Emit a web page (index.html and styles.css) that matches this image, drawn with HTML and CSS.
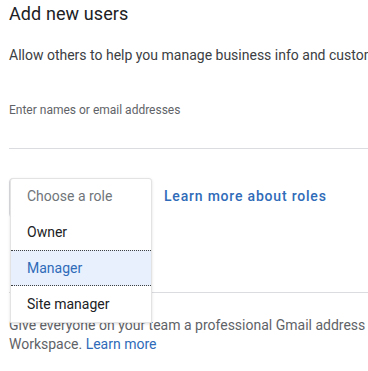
FILE: index.html
```html
<!DOCTYPE html>
<html>
<head>
<meta charset="utf-8">
<link rel="stylesheet" href="styles.css">
</head>
<body>
<div class="page">
  <h1 class="title">Add new users</h1>
  <p class="intro">Allow others to help you manage business info and customer interactions</p>
  <div class="field">
    <div class="label">Enter names or email addresses</div>
    <div class="underline"></div>
  </div>
  <div class="role-row">
    <div class="select-wrap">
      <div class="select"></div>
      <ul class="menu">
        <li class="item placeholder">Choose a role</li>
        <li class="item">Owner</li>
        <li class="item active">Manager</li>
        <li class="item">Site manager</li>
      </ul>
    </div>
    <a class="roles-link">Learn more about roles</a>
  </div>
  <div class="divider"></div>
  <p class="promo">Give everyone on your team a professional Gmail address with Google Workspace. <a class="link">Learn more</a></p>
</div>
</body>
</html>
```
FILE: styles.css
```css
html, body {
  margin: 0;
  padding: 0;
  background: #fff;
  overflow: hidden;
}
.page {
  width: 520px;
  padding-left: 9px;
  font-family: Roboto, "Liberation Sans", Arial, sans-serif;
}
.title {
  margin: 0;
  padding-top: 3px;
  font-size: 18px;
  line-height: 22px;
  font-weight: 400;
  color: #202124;
  letter-spacing: 0.1px;
}
.intro {
  margin: 20px 0 0;
  font-size: 14px;
  line-height: 20px;
  color: #3c4043;
  white-space: nowrap;
}
.field {
  margin-top: 37px;
}
.label {
  font-size: 12px;
  line-height: 16px;
  color: #5f6368;
}
.underline {
  margin-top: 30px;
  height: 1px;
  background: #dadce0;
}
.role-row {
  margin-top: 29px;
  display: flex;
  align-items: flex-start;
}
.select-wrap {
  position: relative;
  width: 141px;
  height: 40px;
}
.select {
  box-sizing: border-box;
  width: 141px;
  height: 40px;
  border: 1px solid #dadce0;
  border-radius: 4px;
}
.menu {
  position: absolute;
  left: 1px;
  top: 0;
  margin: 0;
  padding: 0;
  list-style: none;
  width: 140px;
  background: #fff;
  border: 1px solid #e3e3e3;
  border-radius: 3px 3px 0 0;
  box-shadow: 0 1px 3px rgba(0,0,0,0.12);
  z-index: 2;
}
.item {
  box-sizing: border-box;
  height: 36px;
  line-height: 36px;
  padding-left: 16px;
  font-size: 14px;
  color: #202124;
}
.item.placeholder {
  color: #70757a;
  height: 35px;
  line-height: 35px;
}
.item.active {
  background: #e8f0fe;
  color: #2f6bb8;
  border-top: 1px dotted #3c4043;
  border-bottom: 1px dotted #3c4043;
  line-height: 34px;
}
.roles-link {
  margin-left: 14px;
  margin-top: 8px;
  font-size: 14px;
  line-height: 20px;
  font-weight: 500;
  letter-spacing: 0.8px;
  color: #2f6bb8;
}
.divider {
  margin-top: 74px;
  height: 1px;
  background: #dadce0;
}
.promo {
  margin: 23px 0 0;
  width: 450px;
  font-size: 14px;
  line-height: 19px;
  color: #5f6368;
}
.link {
  color: #2f6bb8;
}
```
